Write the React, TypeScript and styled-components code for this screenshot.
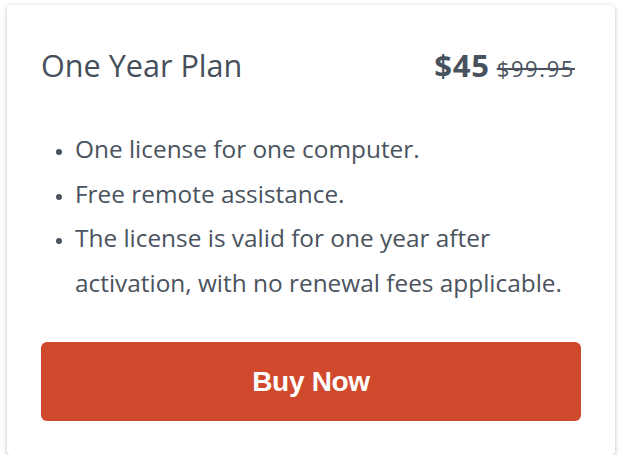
import React from 'react';
import styled, { createGlobalStyle } from 'styled-components';

const FEATURES = [
	'One license for one computer.',
	'Free remote assistance.',
	'The license is valid for one year after activation, with no renewal fees applicable.',
];

const GlobalStyle = createGlobalStyle`
	html, body {
		margin: 0;
		padding: 0;
		background: #ffffff;
	}
	body {
		font-family: 'Open Sans', 'Noto Sans', sans-serif;
		color: #4a535f;
	}
`;

const Page = styled.div`
	padding: 5px 6px 0 7px;
`;

const Card = styled.div`
	box-sizing: border-box;
	width: 608px;
	height: 450px;
	padding: 34px;
	background: #ffffff;
	border-radius: 4px;
	box-shadow: 0 1px 4px rgba(0, 0, 0, 0.18), 0 2px 6px rgba(0, 0, 0, 0.08);
	display: flex;
	flex-direction: column;
`;

const Header = styled.div`
	display: flex;
	align-items: center;
	justify-content: space-between;
	height: 52px;
	padding-right: 6px;
`;

const Title = styled.h2`
	margin: 0;
	font-size: 30.6px;
	font-weight: 400;
	color: #454f5b;
`;

const Price = styled.div`
	display: flex;
	align-items: baseline;
	gap: 7px;
`;

const Current = styled.span`
	font-size: 31px;
	font-weight: 700;
	letter-spacing: 0.8px;
	color: #48525e;
`;

const Old = styled.span`
	font-size: 22px;
	font-weight: 400;
	letter-spacing: 1.6px;
	color: #4a535f;
	text-decoration: line-through;
	text-decoration-thickness: 1.5px;
`;

const List = styled.ul`
	margin: 36px 0 0 0;
	padding: 0 0 0 34px;
	font-size: 24.4px;
	line-height: 44.5px;
	color: #4a535e;
	li::marker {
		font-size: 18px;
	}
`;

const Item = styled.li`
	padding-left: 0;
`;

const BuyButton = styled.button`
	margin-top: auto;
	height: 79px;
	width: 100%;
	border: none;
	border-radius: 6px;
	background: #d0492d;
	color: #ffffff;
	font-family: 'Liberation Sans', Arial, sans-serif;
	font-size: 28px;
	font-weight: 700;
	letter-spacing: -0.3px;
	cursor: pointer;
`;

const App = () => (
	<Page>
		<GlobalStyle />
		<Card>
			<Header>
				<Title>One Year Plan</Title>
				<Price>
					<Current>$45</Current>
					<Old>$99.95</Old>
				</Price>
			</Header>
			<List>
				{FEATURES.map((text) => (
					<Item key={text}>{text}</Item>
				))}
			</List>
			<BuyButton>Buy Now</BuyButton>
		</Card>
	</Page>
);

export default App;
